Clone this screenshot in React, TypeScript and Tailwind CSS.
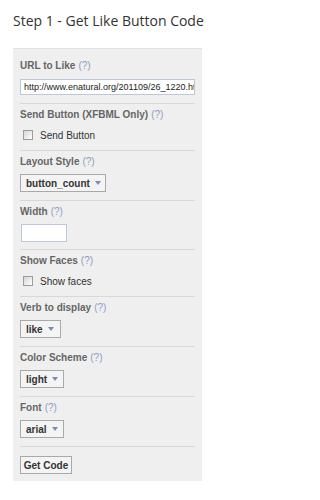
function Help() {
  return <span className="ml-[3px] font-normal text-[#8b9dc3]">(?)</span>
}

function Label({ children }: { children: React.ReactNode }) {
  return (
    <div className="h-[14px] leading-[14px] text-[10px] font-bold text-[#666]">
      {children}
      <Help />
    </div>
  )
}

function Select({ value, w }: { value: string; w: string }) {
  return (
    <div
      className={`mt-[5px] flex h-[18px] ${w} items-center gap-[5px] border border-[#a9a9a9] bg-[#f4f4f4] px-[5px] text-[10px] font-bold text-[#333]`}
    >
      <span>{value}</span>
      <span className="h-0 w-0 border-x-[3.5px] border-t-[4px] border-x-transparent border-t-[#7b8bb0]" />
    </div>
  )
}

function Check({ label }: { label: string }) {
  return (
    <div className="mt-[6px] flex h-[14px] items-center gap-[7px] pl-[3px] text-[10px] text-[#333]">
      <span className="h-[10px] w-[10px] border border-[#9c9c9c] bg-gradient-to-br from-[#d6d6d6] to-white" />
      <span>{label}</span>
    </div>
  )
}

function Section({ children, pb = 'pb-[8px]', last }: { children: React.ReactNode; pb?: string; last?: boolean }) {
  return (
    <div className={`pt-[4px] ${pb} ${last ? '' : 'border-b border-[#d8d8d8]'}`}>{children}</div>
  )
}

export default function App() {
  return (
    <div className="h-[500px] w-[223px] bg-white font-['Liberation_Sans',sans-serif]">
      <h1 className="whitespace-nowrap pl-[13px] pt-[11px] text-[14px] leading-[20px] text-[#333] font-['Open_Sans',sans-serif]">
        Step 1 - Get Like Button Code
      </h1>
      <div className="ml-[13px] mt-[17px] w-[189px] border-t border-[#e2e2e2] bg-[#efefef] px-[7px] pt-[6px]">
        <Section>
          <Label>URL to Like</Label>
          <div className="mt-[6px] h-[16px] overflow-hidden whitespace-nowrap border border-[#bdc7d8] bg-white px-[3px] text-[9px] leading-[14px] text-[#222]">
            http://www.enatural.org/201109/26_1220.html
          </div>
        </Section>
        <Section>
          <Label>Send Button (XFBML Only)</Label>
          <Check label="Send Button" />
        </Section>
        <Section>
          <Label>Layout Style</Label>
          <Select value="button_count" w="w-[86px]" />
        </Section>
        <Section pb="pb-[7px]">
          <Label>Width</Label>
          <div className="mt-[5px] ml-[1px] h-[18px] w-[46px] border border-[#bdc7d8] bg-white" />
        </Section>
        <Section>
          <Label>Show Faces</Label>
          <Check label="Show faces" />
        </Section>
        <Section>
          <Label>Verb to display</Label>
          <Select value="like" w="w-[41px]" />
        </Section>
        <Section>
          <Label>Color Scheme</Label>
          <Select value="light" w="w-[44px]" />
        </Section>
        <Section>
          <Label>Font</Label>
          <Select value="arial" w="w-[44px]" />
        </Section>
        <Section pb="pb-[7px]" last>
          <div className="mt-[5px] flex h-[18px] w-[52px] items-center justify-center border border-[#a9a9a9] bg-[#f4f4f4] text-[10px] font-bold text-[#333]">
            Get Code
          </div>
        </Section>
      </div>
    </div>
  )
}
